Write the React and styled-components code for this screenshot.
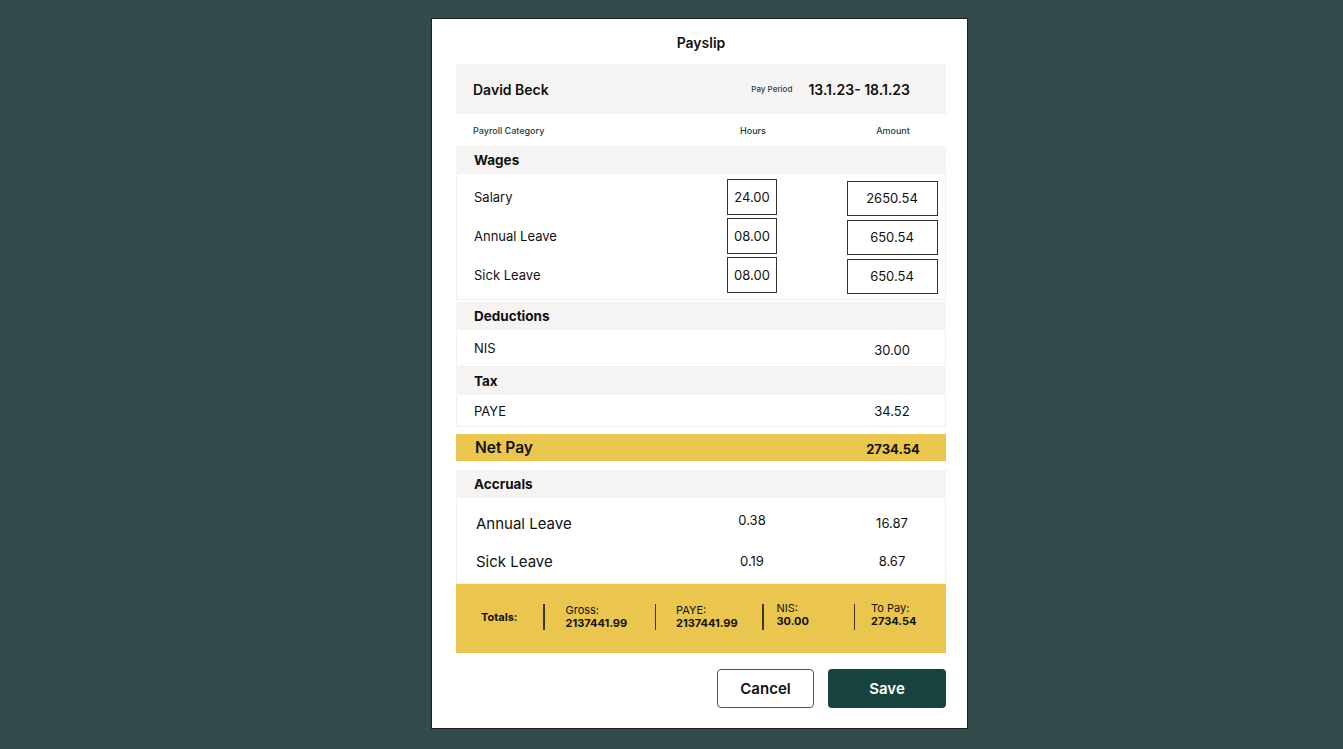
import React from "react"
import styled, { createGlobalStyle } from "styled-components"

const Global = createGlobalStyle`
  html, body {
    margin: 0;
    padding: 0;
    background: #324c4b;
    font-family: 'Inter', 'Liberation Sans', sans-serif;
    color: #111;
  }
`

const Page = styled.div`
  min-height: 749px;
  padding: 18px 0 0 431px;
  box-sizing: border-box;
`

const Card = styled.div`
  width: 537px;
  height: 711px;
  box-sizing: border-box;
  background: #fff;
  border: 1px solid #1e1e1e;
  padding: 0 21px 0 24px;
  display: flex;
  flex-direction: column;
`

const Title = styled.h1`
  margin: 13px 0 10px;
  font-size: 14px;
  line-height: 22px;
  font-weight: 600;
  text-align: center;
`

const Header = styled.div`
  height: 50px;
  background: #f5f4f2;
  display: flex;
  align-items: center;
  padding: 0 36px 0 17px;
`

const Name = styled.div`
  font-size: 14px;
  font-weight: 600;
  flex: 1;
`

const PeriodLabel = styled.span`
  font-size: 8px;
  font-weight: 500;
  color: #1d4645;
  margin-right: 16px;
`

const Period = styled.span`
  font-size: 14px;
  font-weight: 600;
`

const Grid = styled.div`
  display: grid;
  grid-template-columns: 1fr 80px 100px;
  column-gap: 50px;
  align-items: center;
  padding: 0 3px 0 17px;
  height: ${p => p.h || 39}px;
`

const ColHead = styled.span`
  font-size: 9px;
  font-weight: 500;
  color: #163f3d;
  text-align: ${p => (p.center ? "center" : "left")};
`

const SectionHead = styled.div`
  height: 28px;
  margin-top: ${p => p.gap || 0}px;
  background: #f5f4f2;
  display: flex;
  align-items: center;
  padding-left: 18px;
  font-size: 13.5px;
  font-weight: 700;
`

const Rows = styled.div`
  border: 1px solid #f0efed;
  border-top: none;
  padding: ${p => p.pad || "0"};
`

const Label = styled.span`
  font-size: ${p => p.size || 13}px;
  padding-left: ${p => p.indent || 0}px;
  font-weight: 400;
`

const Value = styled.span`
  font-size: 13px;
  text-align: center;
  padding-top: ${p => p.drop || 0}px;
`

const Box = styled.div`
  justify-self: center;
  width: ${p => p.w}px;
  height: ${p => p.ht}px;
  box-sizing: border-box;
  border: 1px solid #333;
  display: flex;
  align-items: center;
  justify-content: center;
  font-size: 13px;
  margin-top: ${p => p.drop || 0}px;
`

const NetPay = styled(Grid)`
  background: #eac64e;
  margin-top: 7px;
  height: 27px;
`

const NetLabel = styled.span`
  font-size: 15.5px;
  font-weight: 600;
  padding-left: 2px;
`

const NetValue = styled.span`
  font-size: 13px;
  font-weight: 700;
  text-align: center;
  padding-top: 3px;
`

const Totals = styled.div`
  height: 69px;
  background: #eac64e;
  display: flex;
  align-items: center;
  padding: 0 0 3px 25px;
  box-sizing: border-box;
`

const TotalsLabel = styled.span`
  font-size: 11px;
  font-weight: 700;
  width: 62px;
`

const Divider = styled.span`
  width: 1.5px;
  height: 26px;
  background: #3a3420;
  margin-right: ${p => p.after}px;
`

const Stat = styled.div`
  display: flex;
  flex-direction: column;
  width: ${p => p.w}px;
  margin-top: ${p => p.up ? -4 : 0}px;
  line-height: 13px;
`

const StatLabel = styled.span`
  font-size: 11px;
  font-weight: 400;
`

const StatValue = styled.span`
  font-size: 11px;
  font-weight: 700;
`

const Actions = styled.div`
  display: flex;
  justify-content: flex-end;
  gap: 14px;
  margin-top: 16px;
`

const Button = styled.button`
  height: 39px;
  width: ${p => p.w}px;
  border-radius: 4px;
  font-family: inherit;
  font-size: 15px;
  font-weight: 600;
  cursor: pointer;
  border: ${p => (p.primary ? "none" : "1px solid #555")};
  background: ${p => (p.primary ? "#17433f" : "#fff")};
  color: ${p => (p.primary ? "#fff" : "#111")};
`

const wages = [
  { name: "Salary", hours: "24.00", amount: "2650.54" },
  { name: "Annual Leave", hours: "08.00", amount: "650.54" },
  { name: "Sick Leave", hours: "08.00", amount: "650.54" },
]

const accruals = [
  { name: "Annual Leave", hours: "0.38", amount: "16.87", up: true },
  { name: "Sick Leave", hours: "0.19", amount: "8.67" },
]

const App = () => (
  <Page>
    <Global />
    <Card>
      <Title>Payslip</Title>

      <Header>
        <Name>David Beck</Name>
        <PeriodLabel>Pay Period</PeriodLabel>
        <Period>13.1.23- 18.1.23</Period>
      </Header>

      <Grid h={32}>
        <ColHead>Payroll Category</ColHead>
        <ColHead center>Hours</ColHead>
        <ColHead center>Amount</ColHead>
      </Grid>

      <SectionHead>Wages</SectionHead>
      <Rows pad="3px 0 5px">
        {wages.map(w => (
          <Grid key={w.name} h={39}>
            <Label>{w.name}</Label>
            <Box w={50} ht={36}>{w.hours}</Box>
            <Box w={91} ht={35} drop={3}>{w.amount}</Box>
          </Grid>
        ))}
      </Rows>

      <SectionHead gap={2}>Deductions</SectionHead>
      <Rows>
        <Grid h={36}>
          <Label>NIS</Label>
          <span />
          <Value drop={4}>30.00</Value>
        </Grid>
      </Rows>

      <SectionHead>Tax</SectionHead>
      <Rows>
        <Grid h={31}>
          <Label>PAYE</Label>
          <span />
          <Value>34.52</Value>
        </Grid>
      </Rows>

      <NetPay>
        <NetLabel>Net Pay</NetLabel>
        <span />
        <NetValue>2734.54</NetValue>
      </NetPay>

      <SectionHead gap={9}>Accruals</SectionHead>
      <Rows pad="6px 0 3px">
        {accruals.map(a => (
          <Grid key={a.name} h={38}>
            <Label size={15} indent={2}>{a.name}</Label>
            <Value style={{ marginTop: a.up ? -6 : 0 }}>{a.hours}</Value>
            <Value>{a.amount}</Value>
          </Grid>
        ))}
      </Rows>

      <Totals>
        <TotalsLabel>Totals:</TotalsLabel>
        <Divider after={21} />
        <Stat w={89}>
          <StatLabel>Gross:</StatLabel>
          <StatValue>2137441.99</StatValue>
        </Stat>
        <Divider after={20} />
        <Stat w={86}>
          <StatLabel>PAYE:</StatLabel>
          <StatValue>2137441.99</StatValue>
        </Stat>
        <Divider after={13} />
        <Stat w={77} up>
          <StatLabel>NIS:</StatLabel>
          <StatValue>30.00</StatValue>
        </Stat>
        <Divider after={16} />
        <Stat w={70} up>
          <StatLabel>To Pay:</StatLabel>
          <StatValue>2734.54</StatValue>
        </Stat>
      </Totals>

      <Actions>
        <Button w={97}>Cancel</Button>
        <Button w={118} primary>Save</Button>
      </Actions>
    </Card>
  </Page>
)

export default App
